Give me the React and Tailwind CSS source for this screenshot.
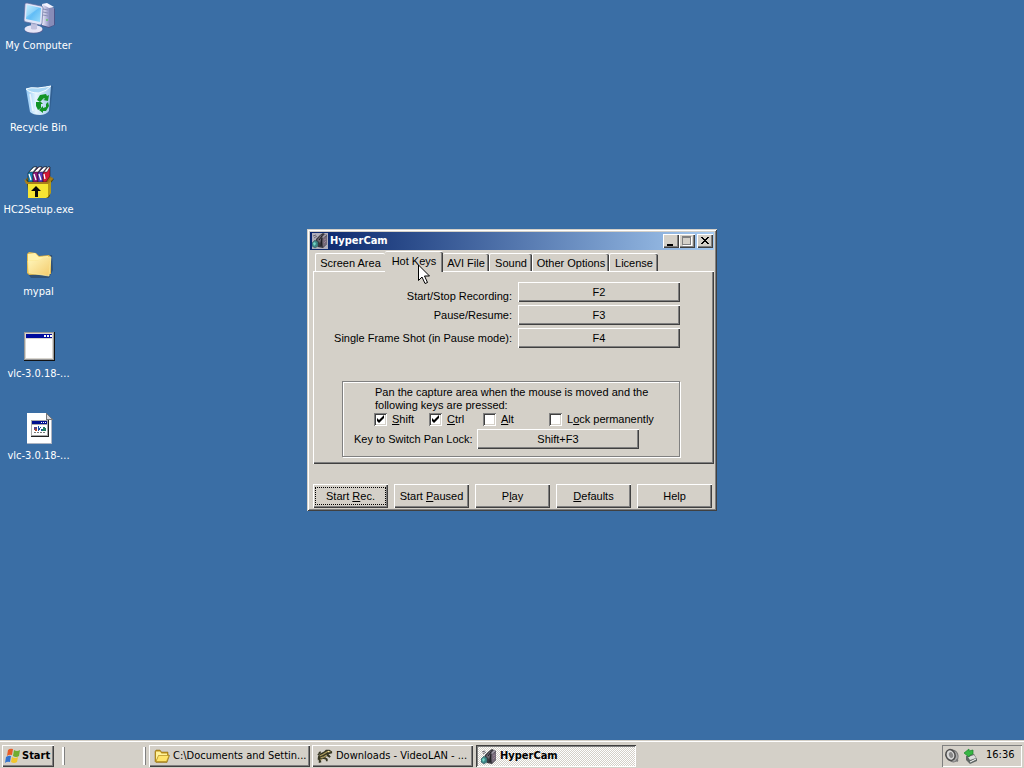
import React, { useState } from "react";

const raised =
  "bg-[#d4d0c8] shadow-[inset_1px_1px_0_#ffffff,inset_-1px_-1px_0_#404040,inset_-2px_-2px_0_#808080]";
const tabEdge = "shadow-[inset_-1px_0_0_#404040,inset_-2px_0_0_#808080]";
const uiFont = "font-['Liberation_Sans',Arial,sans-serif] text-[11px]";
const shellFont = "font-['DejaVu_Sans_Condensed','DejaVu_Sans',sans-serif]";

function ComputerIcon() {
  return (
    <svg viewBox="0 0 32 32" className="size-8" aria-hidden="true">
      <defs>
        <linearGradient id="pcScreen" x1="0" y1="0" x2="1" y2="1">
          <stop offset="0" stopColor="#b8ecff" />
          <stop offset="0.5" stopColor="#62bdf6" />
          <stop offset="1" stopColor="#9adcfa" />
        </linearGradient>
        <linearGradient id="pcCase" x1="0" y1="0" x2="1" y2="0">
          <stop offset="0" stopColor="#eeeefa" />
          <stop offset="1" stopColor="#8f93c4" />
        </linearGradient>
      </defs>
      <path d="M19 3l8 1 5 3v16l-6 3-7-2z" fill="#4a5488" />
      <path d="M19 2l7 2v21l-7-2z" fill="url(#pcCase)" />
      <path d="M26 4l5 2v17l-5 2z" fill="#888cb8" />
      <path d="M19 2l5-1 7 4-5 1z" fill="#f3f3ff" />
      <path d="M20 7l5 1M20 10l5 1M20 13l5 1" stroke="#8a8fb5" />
      <circle cx="24" cy="18" r="1" fill="#65c665" />
      <path d="M2 2Q2 1 4 1l14 3q2 0 2 2l-1 15q0 2-2 2L3 20q-2 0-2-2z" fill="#dfe5f8" stroke="#626c9d" strokeWidth=".7" />
      <path d="M4 3l14 3-1 14L3 17z" fill="url(#pcScreen)" />
      <path d="M4 3l12 3L3 15z" fill="#d7f6ff" opacity=".3" />
      <path d="M8 21l6 1 1 4-7-1z" fill="#aeb0d0" />
      <ellipse cx="11" cy="28" rx="9" ry="3.600" fill="#5a6397" />
      <ellipse cx="10.500" cy="27" rx="9" ry="3.800" fill="#e6e5f6" />
      <path d="M8 22l6 1v4q-3 1-6 0z" fill="#c1c2df" />
    </svg>
  );
}

function RecycleIcon() {
  return (
    <svg viewBox="0 0 32 32" className="size-8" aria-hidden="true">
      <defs>
        <linearGradient id="binBody" x1="0" y1="0" x2="1" y2="0">
          <stop offset="0" stopColor="#8fc6f4" />
          <stop offset="0.4" stopColor="#e5f5ff" />
          <stop offset="1" stopColor="#9fc8ec" />
        </linearGradient>
      </defs>
      <path d="M4 5l26-3-3 25q-4 4-9 4-7 0-10-3z" fill="#2a527f" opacity=".5" />
      <path d="M3 5q3-2 12-1 8-1 13-2l-2 25q-3 4-9 4-7 0-10-3z" fill="url(#binBody)" />
      <path d="M3 5q4-2 12-1 8-1 13-2-4 5-12 7Q7 9 3 5z" fill="#a9d7f5" stroke="#f5fcff" />
      <path d="M7 10l3 17" stroke="#fff" opacity=".7" strokeWidth="1.500" />
      <g fill="#139326">
        <path d="M14 16l3-5 6-1 1 2 2-1-1 6-5-1 2-1-1-1-4 4z" />
        <path d="M13 18l5 0 2 2-2 0 0 4-3 2-2-4z" />
        <path d="M25 18l1 4-3 5h-3v2l-4-3 4-4v2l3-1 0-3z" />
      </g>
    </svg>
  );
}

function SetupIcon() {
  return (
    <svg viewBox="0 0 32 32" className="size-8" aria-hidden="true">
      <path d="M4 17l-1-4 4-2 20 0 4 2-4 5v12l-3 3H6z" fill="#56480c" />
      <path d="M3 13l4-3h20l3 3-6 3H8z" fill="#9a6e13" />
      <g stroke="#171717" strokeWidth=".5">
        <path d="M5 7l5-6h4l-4 6v9H5z" fill="#1681b4" />
        <path d="M10 7l5-6h4l-4 6v9h-5z" fill="#8f1779" />
        <path d="M15 7l5-6h4l-4 6v9h-5z" fill="#5939bd" />
        <path d="M20 7l5-6h2v9l-4 6h-3z" fill="#d31735" />
        <path d="M6 6l5-5h3l-4 5zM11 6l5-5h3l-4 5zM16 6l5-5h3l-4 5zM21 6l4-5h2l-3 5z" fill="#fff" />
      </g>
      <path d="M6 8l2 6M11 8l2 6M16 8l2 6M21 8l1 5" stroke="#fff" strokeWidth="1.300" />
      <path d="M5 16h20v15l-2 1H5z" fill="#f6e532" />
      <path d="M25 16l3-4v15l-3 4z" fill="#b59d16" />
      <path d="M1 13l4 3h20l4-5 1 2-5 5H3z" fill="#a87f1a" />
      <path d="M13 20l5 5h-3v6h-3v-6H8z" fill="#080808" />
    </svg>
  );
}

function FolderIcon({ small = false }) {
  return (
    <svg viewBox="0 0 32 32" className={small ? "size-4 shrink-0" : "size-8"} aria-hidden="true">
      <defs>
        <linearGradient id="folderFill" x1="0" y1="0" x2="1" y2="1">
          <stop offset="0" stopColor="#fff8bf" />
          <stop offset="1" stopColor="#f3ca6a" />
        </linearGradient>
      </defs>
      {small ? (
        <>
          <path d="M2 27V7l2-3h8l3 4h13v5l3 2-5 14H4z" fill="#bd931d" stroke="#8b6b17" />
          <path d="M4 7h8l3 4h11v4H9L4 25z" fill="#fff29a" />
          <path d="M9 15h21l-5 12H4z" fill="#ffe46a" stroke="#a07d18" />
        </>
      ) : (
        <>
          <path d="M5 26V7l3-2 6 1 2 2 13-1 1 15-4 8-18 0z" fill="#2b4057" opacity=".6" />
          <path d="M4 6l2-2 7 1 3 3 10-1 2 2v17L6 27l-2-2z" fill="#e2b94f" />
          <path d="M5 6l7-1 4 4 9-1v3L5 13z" fill="#fff2ad" />
          <path d="M5 13l12-1 3-3 8 0-2 19-20-3z" fill="url(#folderFill)" stroke="#fff1a5" strokeWidth=".7" />
        </>
      )}
    </svg>
  );
}

function ProgramIcon() {
  return (
    <svg viewBox="0 0 32 32" className="size-8" shapeRendering="crispEdges" aria-hidden="true">
      <path d="M1 2h31v29H1z" fill="#111" />
      <path d="M1 2h30v28H1z" fill="#999" />
      <path d="M2 3h28v26H2z" fill="#d8d5ce" />
      <path d="M3 4h26v4H3z" fill="#000c9d" />
      <path d="M21 5h2v2h-2zM24 5h2v2h-2zM27 5h2v2h-2z" fill="#fff" />
      <path d="M3 9h26v19H3z" fill="#fff" />
    </svg>
  );
}

function BatchIcon() {
  return (
    <svg viewBox="0 0 32 32" className="size-8" shapeRendering="crispEdges" aria-hidden="true">
      <path d="M4 1h19l6 6v25H4z" fill="#aeb4c1" />
      <path d="M4 1h19v6h5v24H4z" fill="#fff" />
      <path d="M23 1l6 6h-6z" fill="#d9d9df" stroke="#777" />
      <path d="M8 8h18v17H8z" fill="#222" />
      <path d="M8 8h17v16H8z" fill="#aaa" />
      <path d="M9 9h15v3H9z" fill="#00108f" />
      <path d="M9 13h15v10H9z" fill="#fff" />
      <path d="M18 10h1v1h-1zM20 10h1v1h-1zM22 10h1v1h-1z" fill="#fff" />
      <path d="M11 15h3v3h-3z" fill="#5d4280" />
      <path d="M12 17h2v2h-2z" fill="#ba4c22" />
      <path d="M15 14h1v5h-1zM17 15h1v1h-1zM16 16h1v2h-1zM18 17h1v2h-1z" fill="#174da7" />
      <path d="M20 15h2v1h1v3h-4v-2h1z" fill="#247c62" />
      <path d="M11 20h2v1h-2zM14 20h2v1h-2zM17 20h2v1h-2zM20 20h2v1h-2z" fill="#777" />
    </svg>
  );
}

function CameraIcon({ plate = false }) {
  return (
    <svg viewBox="0 0 16 16" className="size-4 shrink-0" aria-hidden="true">
      {plate && <path d="M0 0h16v16H0z" fill="#b0aebb" />}
      <path d="M4 6L8 2l3-2 4 2v9l-4 4-5-1-2-4z" fill="#3a383f" />
      <path d="M5 7l4-5 1 1-2 7-2-2z" fill="#6d6873" />
      <path d="M10 5l5-2v8l-4 3z" fill="#746a78" />
      <path d="M10 4l3-3 2 1-4 3z" fill="#a39daa" />
      <path d="M12 7l2-1M12 10l2-2" stroke="#9b7f95" />
      <path d="M7 7l3-4M9 13l1-8" stroke="#1b1a1f" />
      <path d="M0 10l3-3 3 2v4l-3 2-3-2z" fill="#3f8586" stroke="#2d4b50" strokeWidth=".5" />
      <path d="M1 10l2-1 1 2-2 2z" fill="#73d6c6" />
      <path d="M1 3l3-1M2 5l3-2" stroke="#6a6773" />
    </svg>
  );
}

function LizardIcon() {
  return (
    <svg viewBox="0 0 18 16" className="h-4 w-4 shrink-0" aria-hidden="true">
      <path d="M1 13q-1-5 3-8l4-2 2-2 4 0 3 2v2l-4 1 2 3-1 1-3-2-2 2 3 1v3h-2v-2l-4-1-2 1 1 3-3 1 0-4z" fill="#363622" />
      <path d="M3 8l4-2 5-3 3 0M4 10l4-1 3-2M4 12h2" stroke="#aa995c" strokeWidth="1.400" fill="none" />
      <path d="M1 7l3-4M2 4l2 1M13 7l2 2M9 10l2 2" stroke="#353522" strokeWidth="1.500" />
      <circle cx="13" cy="3" r=".8" fill="#f4e6a2" />
    </svg>
  );
}

function FlagIcon() {
  return (
    <svg viewBox="0 0 16 16" className="size-4 shrink-0" aria-hidden="true">
      <path d="M4 2q2-2 5-1L8 7q-3-1-5 1z" fill="#e75c27" />
      <path d="M10 2q3 2 6 0l-1 6q-3 2-6 0z" fill="#70ad31" />
      <path d="M2 9q3-2 5-1l-1 6q-3-1-5 1z" fill="#3172cf" />
      <path d="M8 9q3 2 6 0l-1 5q-3 2-6 0z" fill="#f2c62d" />
    </svg>
  );
}

function SpeakerIcon() {
  return (
    <svg viewBox="0 0 16 16" className="size-4" aria-hidden="true">
      <ellipse cx="9" cy="8" rx="5" ry="6" fill="#aaa" stroke="#777" transform="rotate(-20 9 8)" />
      <ellipse cx="6.500" cy="7" rx="4.500" ry="5.500" fill="#d8d8d8" stroke="#4c4c4c" strokeWidth="1.500" transform="rotate(-20 6.500 7)" />
      <ellipse cx="7" cy="7" rx="2" ry="3" fill="#888" transform="rotate(-20 7 7)" />
      <path d="M12 12l2 1" stroke="#777" strokeWidth="2" />
    </svg>
  );
}

function SafelyRemoveIcon() {
  return (
    <svg viewBox="0 0 16 16" className="size-4" aria-hidden="true">
      <path d="M3 8l8-2 3 5v2l-7 3-4-4z" fill="#606765" />
      <path d="M5 9l6-2 2 3-6 2z" fill="#ddd" />
      <path d="M7 14l6-3" stroke="#fff" />
      <path d="M1 5l5-4v2l4-1v4l-3 1-1 2z" fill="#38b744" stroke="#18852a" strokeWidth=".7" />
    </svg>
  );
}

function DesktopItem({ label, children }) {
  return (
    <button type="button" className="flex h-[82px] w-full flex-col items-center pt-0.5">
      {children}
      <span className="mt-[5px] whitespace-nowrap text-[11px] leading-[14px] text-white">{label}</span>
    </button>
  );
}

function Tab({ className, selected, onSelect, children }) {
  return (
    <button
      type="button"
      role="tab"
      aria-selected={selected}
      onClick={onSelect}
      className={`whitespace-nowrap rounded-t-[2px] border-t border-white text-center ${className}`}
    >
      {children}
    </button>
  );
}

function KeyRow({ id, label, value, labelClass }) {
  return (
    <>
      <label htmlFor={id} className={`flex justify-end whitespace-nowrap leading-[11px] ${labelClass}`}>{label}</label>
      <button id={id} type="button" className={`h-5 w-[162px] ${raised}`}>{value}</button>
    </>
  );
}

function CheckBox({ id, children, checked, className }) {
  const [on, setOn] = useState(checked);
  return (
    <div className={`flex items-center gap-[5px] ${className}`}>
      <span className="grid size-[13px]">
        <input
          id={id}
          type="checkbox"
          checked={on}
          onChange={() => setOn(!on)}
          className="peer col-start-1 row-start-1 size-[13px] appearance-none bg-white shadow-[inset_1px_1px_0_#808080,inset_-1px_-1px_0_#ffffff,inset_2px_2px_0_#404040,inset_-2px_-2px_0_#d4d0c8]"
        />
        <svg viewBox="0 0 13 13" className="pointer-events-none invisible col-start-1 row-start-1 size-[13px] peer-checked:visible" aria-hidden="true">
          <path d="M3 5v3l2 2 5-5V2L5 7z" fill="#000" />
        </svg>
      </span>
      <label htmlFor={id} className="whitespace-nowrap">{children}</label>
    </div>
  );
}

function CaptionButton({ label, children, className = "" }) {
  return (
    <button type="button" aria-label={label} className={`h-3.5 w-4 ${raised} ${className}`}>
      <svg viewBox="0 0 16 14" className="h-3.5 w-4" shapeRendering="crispEdges" fill="none">{children}</svg>
    </button>
  );
}

function ActionButton({ children, focused = false }) {
  return (
    <button type="button" className={`h-6 w-[75px] whitespace-nowrap p-1 ${raised}`}>
      <span className={`flex h-full items-center justify-center ${focused ? "-mx-px outline-1 outline-dotted outline-black" : ""}`}>
        <span>{children}</span>
      </span>
    </button>
  );
}

function HyperCamWindow() {
  const [tab, setTab] = useState("keys");
  return (
    <section
      aria-label="HyperCam"
      className={`relative col-start-1 row-start-1 w-[410px] self-center justify-self-center bg-[#d4d0c8] p-[3px] text-black shadow-[inset_1px_1px_0_#d4d0c8,inset_-1px_-1px_0_#404040,inset_2px_2px_0_#ffffff,inset_-2px_-2px_0_#808080] ${uiFont}`}
    >
      <header className="flex h-[18px] items-center bg-linear-to-r from-[#0a246a] to-[#a6caf0] pl-0.5 pr-px text-white">
        <CameraIcon plate />
        <h1 className={`ml-0.5 flex-1 text-[11px] font-bold leading-4 ${shellFont}`}>HyperCam</h1>
        <CaptionButton label="Minimize"><path d="M4 10h6v2H4z" fill="#000" /></CaptionButton>
        <CaptionButton label="Maximize">
          <path d="M4 3h9v9H4z" fill="#fff" />
          <path d="M3 2h9v9H3z" fill="#808080" />
          <path d="M4 4h7v6H4z" fill="#d4d0c8" />
        </CaptionButton>
        <CaptionButton label="Close" className="ml-0.5">
          <path d="M4 3h2v1h1v1h2V4h1V3h2v1h-1v1h-1v1H9v1h1v1h1v1h1v1h-2V9H9V8H7v1H6v1H4V9h1V8h1V7h1V6H6V5H5V4H4z" fill="#000" />
        </CaptionButton>
      </header>

      <div className="pl-[3px]">
        <div role="tablist" className="flex h-[21px] items-end pl-0.5">
          <Tab className="h-[18px] w-[70px] border-l pt-px" selected={tab === "area"} onSelect={() => setTab("area")}>Screen Area</Tab>
          <Tab className={`z-10 -mb-px h-[21px] w-[58px] bg-[#d4d0c8] pb-0.5 ${tabEdge}`} selected={tab === "keys"} onSelect={() => setTab("keys")}>Hot Keys</Tab>
          <Tab className={`h-[18px] w-[46px] pt-px ${tabEdge}`} selected={tab === "avi"} onSelect={() => setTab("avi")}>AVI File</Tab>
          <Tab className={`h-[18px] w-[43px] border-l pt-px ${tabEdge}`} selected={tab === "sound"} onSelect={() => setTab("sound")}>Sound</Tab>
          <Tab className={`h-[18px] w-[77px] border-l pt-px ${tabEdge}`} selected={tab === "other"} onSelect={() => setTab("other")}>Other Options</Tab>
          <Tab className={`h-[18px] w-[49px] border-l pt-px ${tabEdge}`} selected={tab === "license"} onSelect={() => setTab("license")}>License</Tab>
        </div>

        <div role="tabpanel" className={`pb-[7px] pl-[29px] pr-[34px] pt-[11px] ${raised}`}>
          <div className="grid grid-cols-[minmax(0,1fr)_auto] gap-x-1.5 gap-y-[3px]">
            <KeyRow id="record-key" label="Start/Stop Recording:" value="F2" labelClass="self-end" />
            <KeyRow id="pause-key" label="Pause/Resume:" value="F3" labelClass="self-center" />
            <KeyRow id="frame-key" label="Single Frame Shot (in Pause mode):" value="F4" labelClass="self-center" />
          </div>

          <fieldset className="mt-[33px] border border-[#808080] pb-[7px] pl-[11px] pt-1 shadow-[1px_1px_0_#ffffff,inset_1px_1px_0_#ffffff]">
            <p className="ml-[21px] w-[280px] leading-[13px]">
              Pan the capture area when the mouse is moved and the following keys are pressed:
            </p>
            <div className="ml-5 mt-px flex h-[13px]">
              <CheckBox id="pan-shift" checked className="w-[55px]"><u>S</u>hift</CheckBox>
              <CheckBox id="pan-ctrl" checked className="w-[54px]"><u>C</u>trl</CheckBox>
              <CheckBox id="pan-alt" checked={false} className="w-[66px]"><u>A</u>lt</CheckBox>
              <CheckBox id="pan-lock" checked={false} className="">L<u>o</u>ck permanently</CheckBox>
            </div>
            <div className="mt-[3px] flex items-center gap-1.5">
              <label htmlFor="pan-key" className="w-[117px] whitespace-nowrap">Key to Switch Pan Lock:</label>
              <button id="pan-key" type="button" className={`h-5 w-[162px] ${raised}`}>Shift+F3</button>
            </div>
          </fieldset>
        </div>

        <div className="mt-5 flex gap-1.5">
          <ActionButton focused>Start <u>R</u>ec.</ActionButton>
          <ActionButton>Start <u>P</u>aused</ActionButton>
          <ActionButton>P<u>l</u>ay</ActionButton>
          <ActionButton><u>D</u>efaults</ActionButton>
          <ActionButton>Help</ActionButton>
        </div>
      </div>

      <svg viewBox="0 0 12 20" className="pointer-events-none absolute left-[111px] top-[35px] z-20 h-5 w-3" aria-hidden="true">
        <path d="M.5 1v15.500L4 13l3 6.500 2.500-1-3-6.500h5z" fill="#fff" stroke="#000" />
      </svg>
    </section>
  );
}

function TaskButton({ icon, children }) {
  return (
    <button type="button" className={`flex h-[22px] w-[161px] items-center gap-[3px] whitespace-nowrap pl-[5px] pt-px ${raised}`}>
      {icon}
      <span>{children}</span>
    </button>
  );
}

function Taskbar() {
  return (
    <footer className="flex h-7 items-center border-t border-[#d4d0c8] bg-[#d4d0c8] px-0.5 pt-0.5 text-[11px] text-black shadow-[inset_0_1px_0_#ffffff]">
      <button type="button" className={`flex h-[22px] w-[52px] items-center gap-0.5 pl-0.5 pt-px font-bold ${raised}`}>
        <FlagIcon />
        Start
      </button>
      <div className="ml-2 h-[18px] w-[3px] border-l-2 border-r border-l-white border-r-[#808080]" />
      <div className="ml-[78px] h-[18px] w-[3px] border-l-2 border-r border-l-white border-r-[#808080]" />
      <nav aria-label="Running programs" className="ml-[3px] flex flex-1 gap-0.5">
        <TaskButton icon={<FolderIcon small />}>C:\Documents and Settin...</TaskButton>
        <TaskButton icon={<LizardIcon />}>Downloads - VideoLAN - ...</TaskButton>
        <button
          type="button"
          aria-pressed="true"
          className="ml-px flex h-[22px] w-40 items-center gap-[3px] bg-[repeating-conic-gradient(#ffffff_0_25%,#d4d0c8_0_50%)] bg-size-[2px_2px] pl-[5px] pt-0.5 font-bold shadow-[inset_1px_1px_0_#404040,inset_-1px_-1px_0_#ffffff,inset_2px_2px_0_#808080]"
        >
          <CameraIcon />
          HyperCam
        </button>
      </nav>
      <div className="flex h-[22px] w-20 items-center gap-[3px] pl-0.5 shadow-[inset_1px_1px_0_#808080,inset_-1px_-1px_0_#ffffff]">
        <SpeakerIcon />
        <SafelyRemoveIcon />
        <time className="ml-1">16:36</time>
      </div>
    </footer>
  );
}

export default function App() {
  return (
    <div className={`flex min-h-screen flex-col bg-[#3a6ea5] ${shellFont}`}>
      <main className="grid flex-1">
        <nav aria-label="Desktop" className="col-start-1 row-start-1 w-[77px]">
          <DesktopItem label="My Computer"><ComputerIcon /></DesktopItem>
          <DesktopItem label="Recycle Bin"><RecycleIcon /></DesktopItem>
          <DesktopItem label="HC2Setup.exe"><SetupIcon /></DesktopItem>
          <DesktopItem label="mypal"><FolderIcon /></DesktopItem>
          <DesktopItem label="vlc-3.0.18-..."><ProgramIcon /></DesktopItem>
          <DesktopItem label="vlc-3.0.18-..."><BatchIcon /></DesktopItem>
        </nav>
        <HyperCamWindow />
      </main>
      <Taskbar />
    </div>
  );
}
